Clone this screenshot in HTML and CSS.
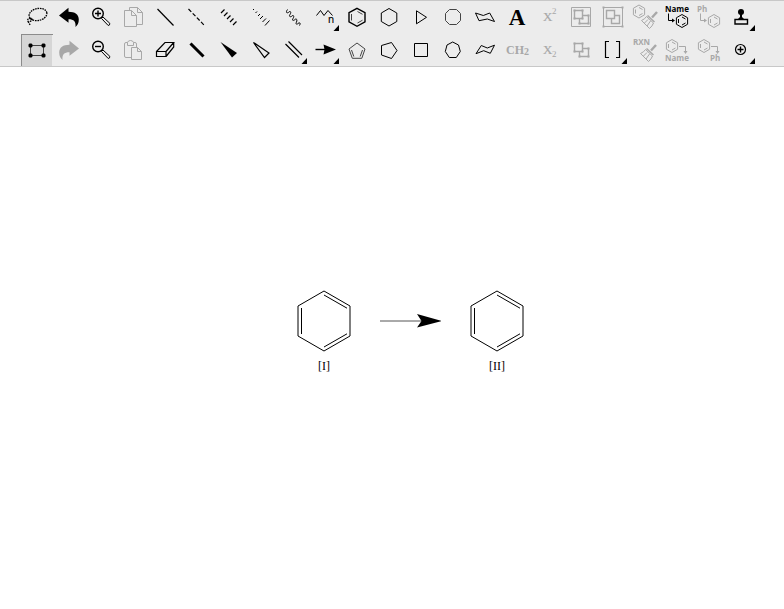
FILE: index.html
```html
<!DOCTYPE html>
<html lang="en">
<head>
<meta charset="utf-8">
<title>Structure editor</title>
<link rel="stylesheet" href="styles.css">
</head>
<body>
<svg class="defs" aria-hidden="true">
  <defs>
    <path id="more" class="fill" d="M24.500 30H30V24Z"/>
    <g id="ring">
      <path d="M0-6.500 5.600-3.250V3.250L0 6.500-5.600 3.250V-3.250Z"/>
      <path d="M0-4 3.500-2M3.500 2 0 4M-3.500-2V2"/>
    </g>
    <g id="broom">
      <path class="thick" d="M27 11 22 16.500"/>
      <path class="mid" d="M17.500 14.500 24.500 21"/>
      <path d="M16.500 15.500 23.500 22M16.500 15.500Q15 18 11.500 19.500L19.500 27.500Q22.500 25 23.500 22M18 18.500 14.500 22M20.500 20 17 25"/>
    </g>
    <g id="undo">
      <path class="fill" d="M6 14.500 15.500 6.800V10.800C22 10.800 25.800 13.500 25.800 18.500 25.800 22 24.500 24.200 22.500 26 23 20.500 21 18.200 15.500 18.200V21.800Z"/>
    </g>
    <g id="lens">
      <circle class="mid" cx="13" cy="12.500" r="5.300"/>
      <path d="M16.500 17.500 18 16 24.800 22.300Q25 24.500 23.200 24.500L16.500 17.500"/>
    </g>
    <g id="squares">
      <path class="mid" d="M9.500 9.500H17.500V17.500H9.500ZM17.500 14.500H23.500V22.500H14.500V17.500"/>
      <path class="fill" d="M8.500 8.500h2v2h-2zM16.500 8.500h2v2h-2zM8.500 16.500h2v2h-2zM16.500 16.500h2v2h-2zM22.500 13.500h2v2h-2zM13.500 21.500h2v2h-2zM22.500 21.500h2v2h-2z"/>
    </g>
    <g id="benzene">
      <path d="M27 1 53 16V46L27 61 1 46V16ZM27 5 50 18.200M50 43.800 27 57M4.500 18V44"/>
    </g>
  </defs>
</svg>

<header class="toolbar" role="toolbar" aria-label="Drawing tools">
  <div class="row">
    <button class="tool" aria-label="Lasso"><svg viewBox="0 0 32 32"><ellipse class="lasso" cx="17" cy="13.500" rx="9" ry="6" transform="rotate(-12 17 13.500)"/><path class="lasso" d="M10 17.500C5 17 6 21.500 9 20.500S12 16 9.500 18M7 20.500 9.500 24.500"/></svg></button>
    <button class="tool" aria-label="Undo"><svg viewBox="0 0 32 32"><use href="#undo"/></svg></button>
    <button class="tool" aria-label="Zoom in"><svg viewBox="0 0 32 32"><use href="#lens"/><path class="mid" d="M10 12.500H16M13 9.500V15.500"/></svg></button>
    <button class="tool" aria-label="Copy" disabled><svg viewBox="0 0 32 32"><path d="M12.500 9V6.500H20.500L25.500 11.500V23.500H20M20.500 6.500V11.500H25.500M7.500 9.500H14.500L19.500 14.500V25.500H7.500ZM14.500 9.500V14.500H19.500"/></svg></button>
    <button class="tool" aria-label="Single bond"><svg viewBox="0 0 32 32"><path class="line" d="M8.500 8 24.500 24.500"/></svg></button>
    <button class="tool" aria-label="Dashed bond"><svg viewBox="0 0 32 32"><path class="line dash" d="M7.500 8 23.500 24.500"/></svg></button>
    <button class="tool" aria-label="Hashed bond"><svg viewBox="0 0 32 32"><path class="line" d="M11.500 8.500 8 12M14.500 11.500 11 15M17.500 14.500 14 18M20.500 17.500 17 21M23.500 20.500 20 24"/></svg></button>
    <button class="tool" aria-label="Hashed wedge"><svg viewBox="0 0 32 32"><path d="M9 8 8 9M12 10.500 10.500 12M15 13 13 15M18 15 15 18M21 17.500 17.500 21M24.500 19.500 20 24.500"/></svg></button>
    <button class="tool" aria-label="Wavy bond"><svg viewBox="0 0 32 32"><path d="M10.500 8.500C8 12 10.500 12.500 12 11S14.500 11.500 13 13.500 13.500 16.500 15 15 17.500 15.500 16 17.500 16.500 20 18 18.500 20.500 19 19.500 21 19.500 24 21 22.500 24 22 22.500 24.500"/></svg></button>
    <button class="tool" aria-label="Chain"><svg viewBox="0 0 32 32"><path d="M7.500 14.500 11.500 9.500 15 14.500 19 9.500 23.500 14.500"/><text class="chain-n" x="19" y="22">n</text><use href="#more"/></svg></button>
    <button class="tool" aria-label="Benzene"><svg viewBox="0 0 32 32"><path class="mid" d="M16 7.300 24 11.700V20.800L16 25.300 8 20.800V11.700Z"/><path class="soft" d="M16.500 10.500 21.500 13.300M21.500 19.200 16.500 22M10.500 13V19.500"/></svg></button>
    <button class="tool" aria-label="Cyclohexane"><svg viewBox="0 0 32 32"><path d="M16 7.500 23.800 12V20.500L16 25 8.300 20.500V12Z"/></svg></button>
    <button class="tool" aria-label="Cyclopropane"><svg viewBox="0 0 32 32"><path d="M11.500 9.800 21.500 16.300 11.500 22.800Z"/></svg></button>
    <button class="tool" aria-label="Cyclooctane"><svg viewBox="0 0 32 32"><path class="soft" d="M12.500 8.500H19.500L23.500 12.500V19.500L19.500 23.500H12.500L8.500 19.500V12.500Z"/></svg></button>
    <button class="tool" aria-label="Chair, left"><svg viewBox="0 0 32 32"><path d="M6.500 12 14.300 14.500 20.700 12 25.500 20.500 18.300 18 10 19.700Z"/></svg></button>
    <button class="tool" aria-label="Text"><svg viewBox="0 0 32 32"><text class="letter" x="16" y="24">A</text></svg></button>
    <button class="tool" aria-label="Superscript" disabled><svg viewBox="0 0 32 32"><text class="script-x" x="10" y="20">X</text><text class="script-n" x="19" y="13">2</text></svg></button>
    <button class="tool" aria-label="Group" disabled><svg viewBox="0 0 32 32"><path d="M6.500 6.500H25.500V25.500H6.500Z"/><use href="#squares"/></svg></button>
    <button class="tool" aria-label="Frame" disabled><svg viewBox="0 0 32 32"><path d="M6.500 6.500H25.500V25.500H6.500Z"/><path class="mid" d="M9.500 9.500H17.500V17.500H9.500ZM17.500 14.500H22.500V22.500H14.500V17.500"/><path class="fill" d="M5.500 5.500h2v2h-2zM24.500 5.500h2v2h-2zM5.500 24.500h2v2h-2zM24.500 24.500h2v2h-2z"/></svg></button>
    <button class="tool" aria-label="Clean structure" disabled><svg viewBox="0 0 32 32"><use href="#ring" x="10" y="10.500"/><use href="#broom" x="1" y="0"/></svg></button>
    <button class="tool" aria-label="Name to structure"><svg viewBox="0 0 32 32"><text class="tag" x="4" y="11">Name</text><path d="M7.500 12.500V19.500H12"/><path class="fill" d="M11 17.500 14 19.500 11 21.500Z"/><use href="#ring" x="21" y="20"/></svg></button>
    <button class="tool" aria-label="Abbreviation to structure" disabled><svg viewBox="0 0 32 32"><text class="tag" x="4" y="11">Ph</text><path d="M7.500 12.500V19.500H12"/><path class="fill" d="M11 17.500 14 19.500 11 21.500Z"/><use href="#ring" x="21" y="20"/></svg></button>
    <button class="tool" aria-label="Stamp"><svg viewBox="0 0 32 32"><circle class="fill" cx="16" cy="11" r="3"/><path class="fill" d="M15 13H17V16L19 18H13L15 16Z"/><path class="mid" d="M10 18.500H22.500V23H10Z"/><use href="#more"/></svg></button>
  </div>
  <div class="row">
    <button class="tool selected" aria-label="Marquee" aria-pressed="true"><svg viewBox="0 0 32 32"><path class="soft" d="M9.500 11.500H22.500V21.500H9.500Z"/><path class="fill" d="M8.500 9.500h2l1 1v2l-1 1h-2l-1-1v-2zM21.500 9.500h2l1 1v2l-1 1h-2l-1-1v-2zM8.500 19.500h2l1 1v2l-1 1h-2l-1-1v-2zM21.500 19.500h2l1 1v2l-1 1h-2l-1-1v-2z"/></svg></button>
    <button class="tool" aria-label="Redo" disabled><svg viewBox="0 0 32 32"><use href="#undo" transform="translate(32 0) scale(-1 1)"/></svg></button>
    <button class="tool" aria-label="Zoom out"><svg viewBox="0 0 32 32"><use href="#lens"/><path class="mid" d="M10 12.500H16"/></svg></button>
    <button class="tool" aria-label="Paste" disabled><svg viewBox="0 0 32 32"><path d="M14 23.500H9Q7.500 23.500 7.500 22V10Q7.500 8.500 9 8.500H10.500M16.500 8.500H18Q19.500 8.500 19.500 10V13M10.500 11.500V8.500Q11 6.500 13.500 6.500T16.500 8.500V11.500ZM14.500 13.500H20.500L24.500 17.500V25.500H14.500ZM20.500 13.500V17.500H24.500"/></svg></button>
    <button class="tool" aria-label="Eraser"><svg viewBox="0 0 32 32"><path class="line" d="M7.500 17.500H17V22.500H7.500ZM7.500 17.500 16 8.500H24.700L17 17.500M24.700 8.500V13L17 22.500"/></svg></button>
    <button class="tool" aria-label="Bold bond"><svg viewBox="0 0 32 32"><path class="bold" d="M9.500 9.500 22.500 22.500"/></svg></button>
    <button class="tool" aria-label="Wedge bond"><svg viewBox="0 0 32 32"><path class="fill" d="M7.500 8 24 19 19 23.500Z"/></svg></button>
    <button class="tool" aria-label="Hollow wedge"><svg viewBox="0 0 32 32"><path class="line" d="M8.500 8.500 24 19 19.500 23.500Z"/></svg></button>
    <button class="tool" aria-label="Double bond"><svg viewBox="0 0 32 32"><path class="line" d="M11.500 7.500 25 21M8.500 10 22 23.500"/><use href="#more"/></svg></button>
    <button class="tool" aria-label="Reaction arrow"><svg viewBox="0 0 32 32"><path class="mid" d="M6.500 15.500H17"/><path class="fill" d="M14.500 10.500 27 15.500 14.500 20.500 15.500 15.500Z"/><use href="#more"/></svg></button>
    <button class="tool" aria-label="Cyclopentadiene"><svg viewBox="0 0 32 32"><path class="soft" d="M16 9 24 15 20.800 24.300H11.300L8 15ZM21.500 16 19.200 22.500M10.500 16 12.800 22.500"/></svg></button>
    <button class="tool" aria-label="Cyclopentane"><svg viewBox="0 0 32 32"><path d="M24 16.500 18.500 24.500 8.500 21V11.500L18.500 8.500Z"/></svg></button>
    <button class="tool" aria-label="Cyclobutane"><svg viewBox="0 0 32 32"><path d="M9.500 9.500H22.500V22.500H9.500Z"/></svg></button>
    <button class="tool" aria-label="Cycloheptane"><svg viewBox="0 0 32 32"><path d="M15.700 8 21.500 11 23.300 17.500 19.300 23.500H12.300L8.300 17.500 10 11Z"/></svg></button>
    <button class="tool" aria-label="Chair, right"><svg viewBox="0 0 32 32"><path d="M7 19.700 12.300 11.500 18.300 14 25.500 11.200 21.300 19.300 14.700 16.700Z"/></svg></button>
    <button class="tool" aria-label="Formula" disabled><svg viewBox="0 0 32 32"><text class="formula" x="5" y="20">CH<tspan class="formula-n" dy="1">2</tspan></text></svg></button>
    <button class="tool" aria-label="Subscript" disabled><svg viewBox="0 0 32 32"><text class="script-x" x="10" y="20">X</text><text class="script-n" x="19" y="23">2</text></svg></button>
    <button class="tool" aria-label="Ungroup" disabled><svg viewBox="0 0 32 32"><use href="#squares"/></svg></button>
    <button class="tool" aria-label="Brackets"><svg viewBox="0 0 32 32"><path class="line" d="M12 7.500H8.500V23.500H12M19 7.500H22.500V23.500H19"/><use href="#more"/></svg></button>
    <button class="tool" aria-label="Clean reaction" disabled><svg viewBox="0 0 32 32"><text class="tag" x="4" y="11">RXN</text><use href="#broom"/></svg></button>
    <button class="tool" aria-label="Structure to name" disabled><svg viewBox="0 0 32 32"><use href="#ring" x="11" y="12"/><path d="M18 12.500H24.500V18"/><path class="fill" d="M22.500 17H26.500L24.500 20Z"/><text class="tag" x="4" y="27">Name</text></svg></button>
    <button class="tool" aria-label="Structure to abbreviation" disabled><svg viewBox="0 0 32 32"><use href="#ring" x="11" y="12"/><path d="M18 12.500H24.500V18"/><path class="fill" d="M22.500 17H26.500L24.500 20Z"/><text class="tag" x="17" y="27">Ph</text></svg></button>
    <button class="tool" aria-label="Charge"><svg viewBox="0 0 32 32"><circle class="line" cx="15.500" cy="15.500" r="5"/><path class="mid" d="M12.500 15.500H18.500M15.500 12.500V18.500"/><use href="#more"/></svg></button>
  </div>
</header>

<main class="canvas">
  <figure class="molecule">
    <svg viewBox="0 0 54 62" aria-hidden="true"><use href="#benzene"/></svg>
    <figcaption>[I]</figcaption>
  </figure>
  <svg class="arrow" viewBox="0 0 61 62" aria-hidden="true"><path class="shaft" d="M0 31H42"/><path class="fill" d="M37 24 61.500 31 37 37.500 41.500 31Z"/></svg>
  <figure class="molecule">
    <svg viewBox="0 0 54 62" aria-hidden="true"><use href="#benzene"/></svg>
    <figcaption>[II]</figcaption>
  </figure>
</main>
</body>
</html>
```
FILE: styles.css
```css
* {
  box-sizing: border-box;
}

body {
  margin: 0;
  min-height: 100vh;
  background: #fff;
  color: #000;
  font-family: "Liberation Serif", serif;
}

.defs {
  position: absolute;
  width: 0;
  height: 0;
}

.toolbar {
  display: flex;
  flex-direction: column;
  gap: 1px;
  padding-left: 21px;
  background: #ececec;
  border-top: 1px solid #c8c8c8;
  border-bottom: 1px solid #c8c8c8;
}

.row {
  display: flex;
}

.tool {
  flex: none;
  width: 32px;
  height: 32px;
  padding: 0;
  border: 0;
  background: none;
  color: #000;
}

.tool:disabled {
  color: #a8a8a8;
}

.tool.selected {
  background: #d6d6d6;
  box-shadow: inset 1px 1px #8c8c8c, inset -1px 0 #ececec;
}

svg {
  display: block;
  fill: none;
  stroke: currentColor;
  stroke-width: 1;
}

.fill,
text {
  fill: currentColor;
  stroke: none;
}

.line {
  stroke-width: 1.2;
}

.mid {
  stroke-width: 1.4;
}

.thick {
  stroke-width: 2.4;
}

.bold {
  stroke-width: 3;
}

.soft {
  stroke: #444;
}

.lasso {
  stroke-width: 1.3;
  stroke-dasharray: 1.6 0.8;
}

.dash {
  stroke-dasharray: 4 2;
}

.chain-n {
  font: 10px "Open Sans", sans-serif;
  stroke: currentColor;
  stroke-width: 0.2;
}

.letter {
  font: bold 23px "Liberation Serif", serif;
  text-anchor: middle;
}

.script-x {
  font: 13px "Liberation Serif", serif;
  stroke: currentColor;
  stroke-width: 0.2;
}

.script-n {
  font: 9px "Liberation Serif", serif;
}

.formula {
  font: bold 12px "Liberation Serif", serif;
}

.formula-n {
  font-size: 10px;
}

.tag {
  font: bold 8px "Open Sans", sans-serif;
}

.canvas {
  display: flex;
  justify-content: center;
  gap: 29px;
  padding: 223px 0 0 37px;
}

.molecule {
  display: flex;
  flex-direction: column;
  align-items: center;
  gap: 7px;
  width: 54px;
  margin: 0;
  font-size: 12px;
  line-height: 14px;
}

.arrow {
  width: 61px;
  height: 62px;
}

.shaft {
  stroke: #555;
}
```
